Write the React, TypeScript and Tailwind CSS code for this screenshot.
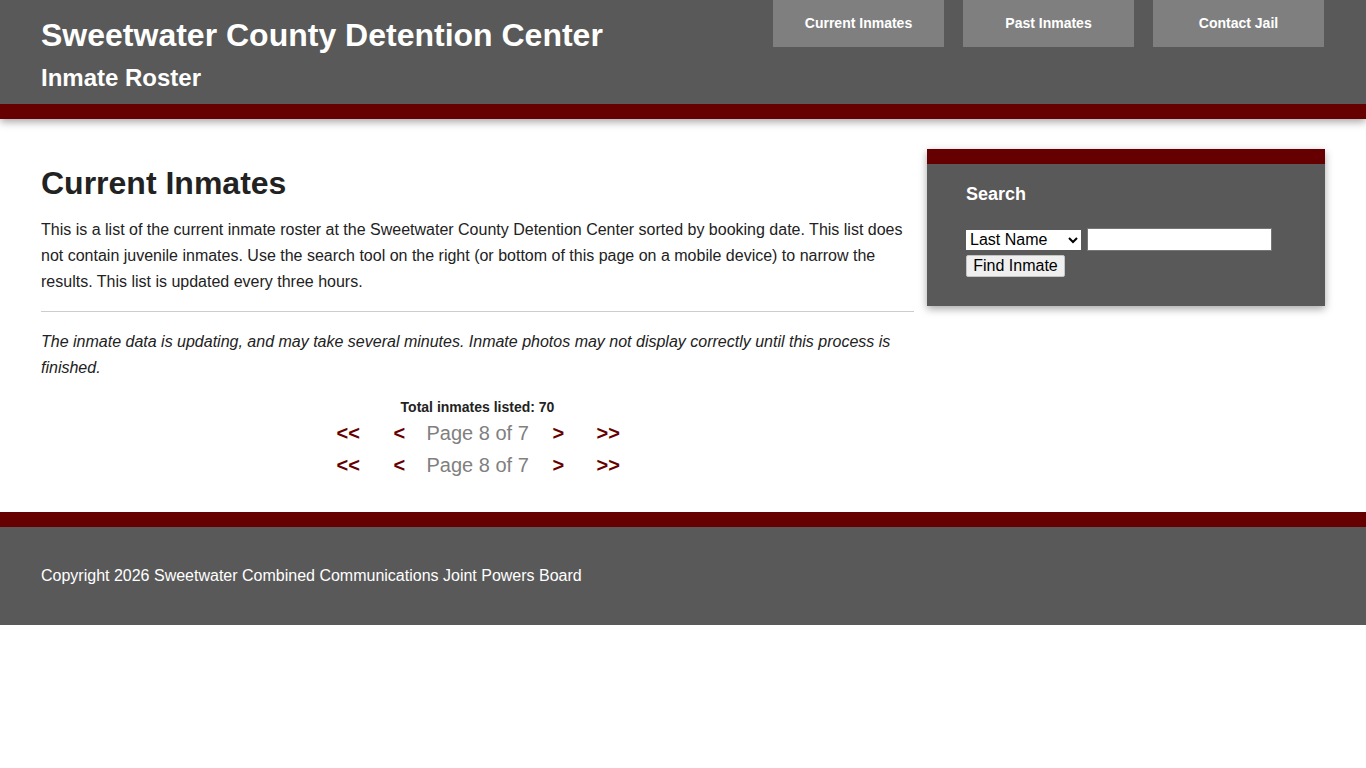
import React from 'react'

const navItems = ['Current Inmates', 'Past Inmates', 'Contact Jail']

function Pager() {
  return (
    <div className="flex justify-center items-center h-[32px] text-[20px] leading-[32px] whitespace-nowrap">
      <a className="font-bold text-[#660000] w-[22px] text-center">&lt;&lt;</a>
      <a className="font-bold text-[#660000] ml-[35px] w-[10px] text-center">&lt;</a>
      <span className="text-[#808080] ml-[23px] w-[102px] text-center">Page 8 of 7</span>
      <a className="font-bold text-[#660000] ml-[24px] w-[10px] text-center">&gt;</a>
      <a className="font-bold text-[#660000] ml-[34px] w-[22px] text-center">&gt;&gt;</a>
    </div>
  )
}

export default function App() {
  return (
    <div className="min-h-[768px] bg-white font-['Liberation_Sans',Arial,sans-serif] text-[#222]">
      {/* Header */}
      <header className="relative z-10 shadow-[0_3px_8px_rgba(0,0,0,0.35)]">
        <div className="bg-[#595959] h-[104px] px-[41px] flex justify-between">
          <div className="text-white">
            <h1 className="text-[32px] font-bold leading-[37px] pt-[17px]">Sweetwater County Detention Center</h1>
            <h2 className="text-[24px] font-bold leading-[28px] mt-[10px]">Inmate Roster</h2>
          </div>
          <nav className="flex gap-[19px] mr-[1px]">
            {navItems.map((item) => (
              <a
                key={item}
                className="w-[171px] h-[47px] bg-[#7f7f7f] text-white text-[14px] font-bold flex items-center justify-center"
              >
                {item}
              </a>
            ))}
          </nav>
        </div>
        <div className="bg-[#660000] h-[15px]" />
      </header>

      {/* Main */}
      <main className="px-[41px] pt-[30px] pb-[31px] flex gap-[13px]">
        <div className="w-[873px]">
          <h2 className="text-[32px] font-bold leading-[37px] mt-[16px] text-[#222]">Current Inmates</h2>
          <p className="text-[16px] leading-[26px] mt-[15px]">
            This is a list of the current inmate roster at the Sweetwater County Detention Center sorted by booking date. This list does not contain juvenile inmates. Use the search tool on the right (or bottom of this page on a mobile device) to narrow the results. This list is updated every three hours.
          </p>
          <hr className="border-0 border-t border-[#cccccc] mt-[16px]" />
          <p className="text-[16px] leading-[26px] italic mt-[17px]">
            The inmate data is updating, and may take several minutes. Inmate photos may not display correctly until this process is finished.
          </p>
          <div className="mt-[18px] text-center text-[14px] font-bold leading-[16px]">Total inmates listed: 70</div>
          <div className="mt-[2px]">
            <Pager />
            <Pager />
          </div>
        </div>

        <aside className="w-[398px] self-start shadow-[0_3px_8px_rgba(0,0,0,0.35)]">
          <div className="bg-[#660000] h-[15px]" />
          <div className="bg-[#595959] pl-[39px] pt-[20px] pb-[28px]">
            <h3 className="text-white text-[18px] font-bold leading-[21px]">Search</h3>
            <div className="mt-[23px] flex items-center gap-[6px]">
              <select className="bg-white text-black text-[16px] h-[20px] w-[115px] leading-[18px] font-['Liberation_Sans',Arial,sans-serif]">
                <option>Last Name</option>
                <option>First Name</option>
                <option>Booking Number</option>
              </select>
              <input type="text" className="bg-white h-[23px] w-[185px] border border-[#767676]" />
            </div>
            <button className="mt-[4px] bg-[#efefef] text-black text-[16px] leading-[18px] h-[22px] w-[99px] border border-[#c4c4c4] rounded-[2px]">
              Find Inmate
            </button>
          </div>
        </aside>
      </main>

      {/* Footer */}
      <footer>
        <div className="bg-[#660000] h-[15px]" />
        <div className="bg-[#595959] px-[41px] py-[39px] text-white text-[16px] leading-[20px]">
          Copyright 2026 Sweetwater Combined Communications Joint Powers Board
        </div>
      </footer>
    </div>
  )
}
